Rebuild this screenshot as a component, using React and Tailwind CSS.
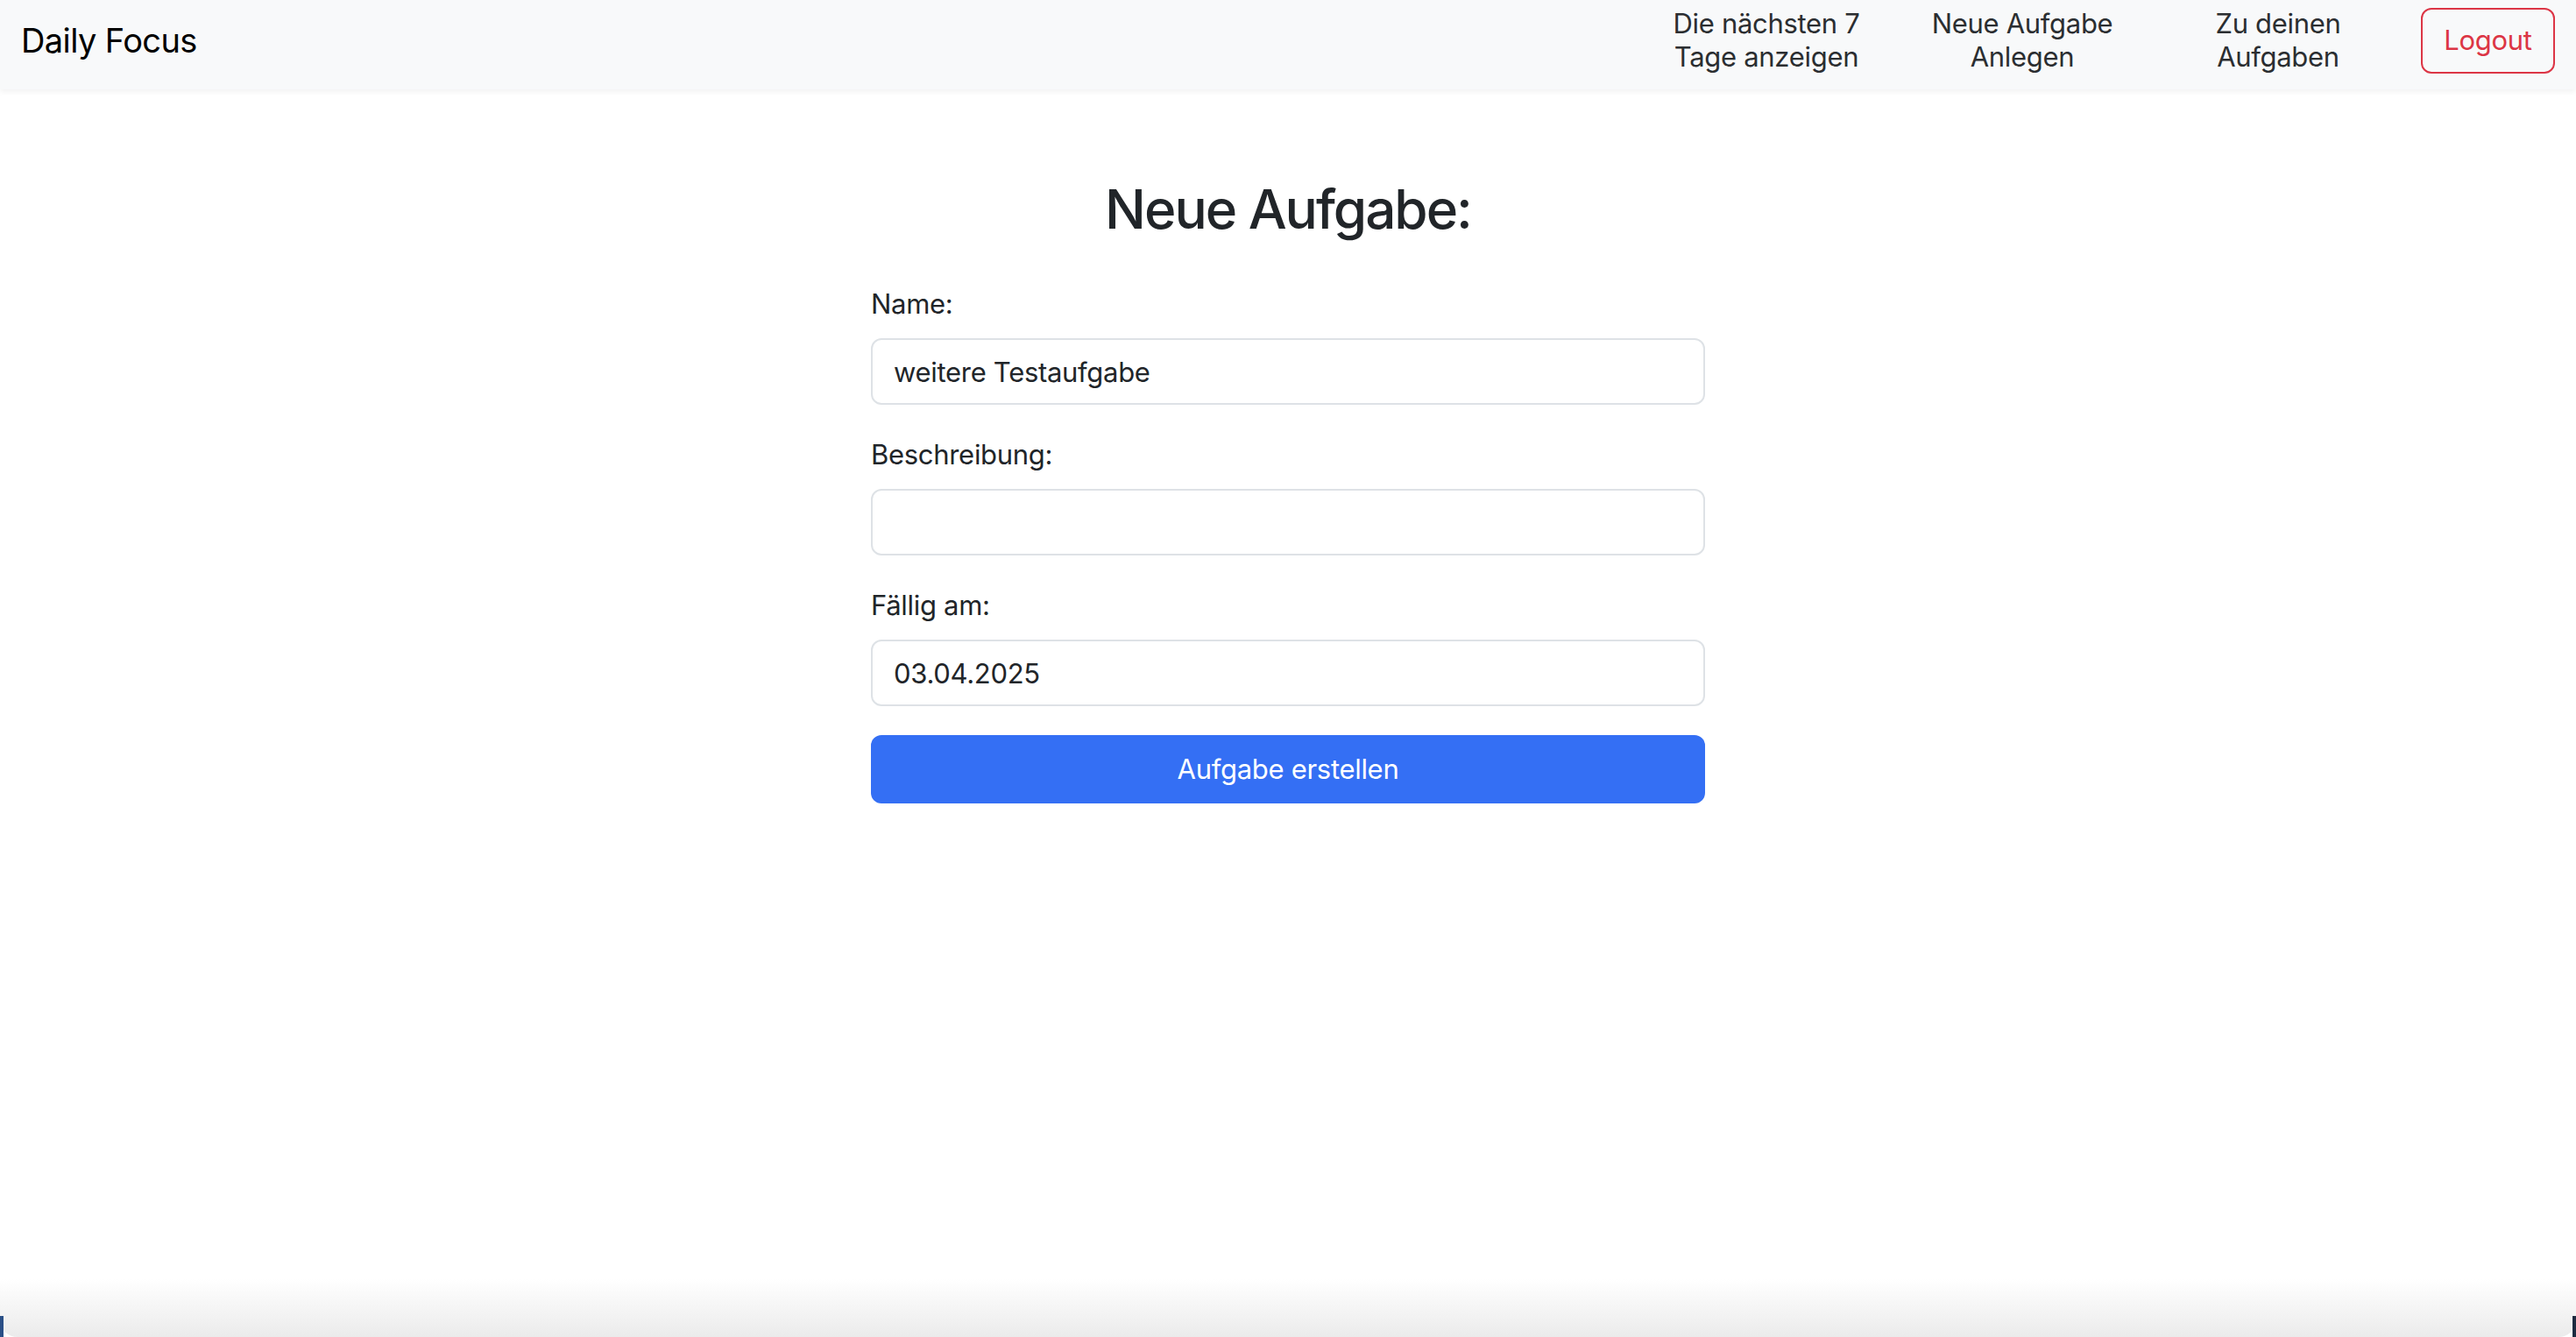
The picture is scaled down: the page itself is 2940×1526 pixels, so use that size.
import React, { useState } from 'react';

const FONT = { fontFamily: 'Inter, "Noto Sans", "Liberation Sans", sans-serif' };

const NAV_LINKS = [
  ['Die nächsten 7', 'Tage anzeigen'],
  ['Neue Aufgabe', 'Anlegen'],
  ['Zu deinen', 'Aufgaben'],
];

function Field({ label, value, onChange }) {
  return (
    <div className="mb-[33px] flex flex-col">
      <label className="mb-[15px] text-[31px] leading-[48px] text-[#212529] tracking-[-0.3px]">{label}</label>
      <input
        value={value}
        onChange={e => onChange(e.target.value)}
        className="h-[76px] w-full rounded-[12px] border-2 border-[#dee2e6] bg-white px-[24px] text-[31px] text-[#212529] tracking-[-0.3px] outline-none"
      />
    </div>
  );
}

export default function App() {
  const [name, setName] = useState('weitere Testaufgabe');
  const [desc, setDesc] = useState('');
  const [due, setDue] = useState('03.04.2025');

  return (
    <div className="relative flex min-h-screen flex-col overflow-hidden bg-white" style={FONT}>
      {/* ── Navbar ─────────────────────── */}
      <nav className="relative z-10 flex h-[102px] items-start bg-[#f8f9fa] pl-[24px] pr-[24px] pt-[8px] shadow-[0_3px_6px_rgba(0,0,0,0.05)]">
        <div className="flex h-[75px] items-center">
          <span className="text-[38px] leading-none text-black tracking-[-0.6px]">Daily Focus</span>
        </div>
        <div className="ml-auto flex items-center">
          {NAV_LINKS.map(([a, b]) => (
            <a key={a} className="flex w-[292px] flex-col items-center text-center text-[31px] leading-[38px] text-[#2b2e31] tracking-[-0.3px]">
              <span>{a}</span>
              <span>{b}</span>
            </a>
          ))}
          <button className="ml-[17px] flex h-[75px] w-[153px] items-center justify-center rounded-[12px] border-2 border-[#dc3545] text-[31px] text-[#dc3545] tracking-[-0.3px]">
            Logout
          </button>
        </div>
      </nav>

      {/* ── Form ───────────────────────── */}
      <main className="mx-auto mt-[98px] w-[1000px] px-[24px]">
        <h2 className="mb-[46px] text-center text-[62px] font-medium leading-[77px] text-[#212529] tracking-[-2px]">
          Neue Aufgabe:
        </h2>
        <Field label="Name:" value={name} onChange={setName} />
        <Field label="Beschreibung:" value={desc} onChange={setDesc} />
        <Field label="Fällig am:" value={due} onChange={setDue} />
        <button className="h-[78px] w-full rounded-[12px] bg-[#346ff4] text-[31px] text-white tracking-[-0.3px]">
          Aufgabe erstellen
        </button>
      </main>

      {/* window edge shading at the bottom */}
      <div className="pointer-events-none absolute bottom-0 left-0 right-0 h-[66px] rounded-b-[20px] bg-gradient-to-b from-white to-[#ebebeb]" />
      <div className="pointer-events-none absolute bottom-0 left-0 h-[24px] w-[4px] bg-[#2a4f86]" />
      <div className="pointer-events-none absolute bottom-0 right-0 h-[24px] w-[4px] bg-[#1c2a40]" />
    </div>
  );
}
